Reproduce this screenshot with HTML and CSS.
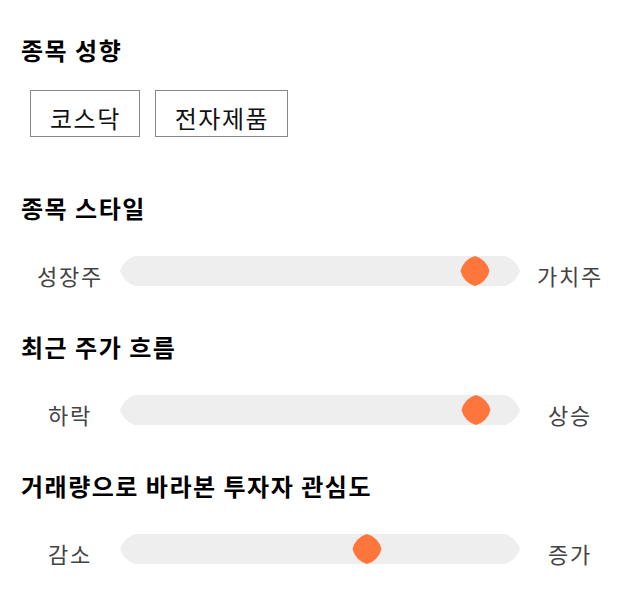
FILE: index.html
```html
<!DOCTYPE html>
<html>
<head>
  <title>종목 성향</title>
  <meta name="viewport" content="width=device-width, initial-scale=1.0">
  <link rel="stylesheet" href="styles.css">
</head>
<body>
  <div class="container">
    <section class="section">
      <h3 class="title">종목 성향</h3>
      <div class="tags">
        <span class="tag">코스닥</span>
        <span class="tag">전자제품</span>
      </div>
    </section>

    <section class="section">
      <h3 class="title">종목 스타일</h3>
      <div class="slider-row">
        <span class="label">성장주</span>
        <div class="track">
          <svg class="track-bg" viewBox="0 0 400 30" width="400" height="30">
            <path d="M15 0 H385 A24 24 0 0 1 400 15 A24 24 0 0 1 385 30 H15 A24 24 0 0 1 0 15 A24 24 0 0 1 15 0 Z" fill="#eeeeee"/>
          </svg>
          <svg class="thumb" style="left: 340px;" viewBox="0 0 30 30" width="30" height="30">
            <path d="M15 0 A20 20 0 0 1 29.5 15 A20 20 0 0 1 15 30 A20 20 0 0 1 0.5 15 A20 20 0 0 1 15 0 Z" fill="#ff763d"/>
          </svg>
        </div>
        <span class="label">가치주</span>
      </div>
    </section>

    <section class="section">
      <h3 class="title">최근 주가 흐름</h3>
      <div class="slider-row">
        <span class="label">하락</span>
        <div class="track">
          <svg class="track-bg" viewBox="0 0 400 30" width="400" height="30">
            <path d="M15 0 H385 A24 24 0 0 1 400 15 A24 24 0 0 1 385 30 H15 A24 24 0 0 1 0 15 A24 24 0 0 1 15 0 Z" fill="#eeeeee"/>
          </svg>
          <svg class="thumb" style="left: 341px;" viewBox="0 0 30 30" width="30" height="30">
            <path d="M15 0 A20 20 0 0 1 29.5 15 A20 20 0 0 1 15 30 A20 20 0 0 1 0.5 15 A20 20 0 0 1 15 0 Z" fill="#ff763d"/>
          </svg>
        </div>
        <span class="label">상승</span>
      </div>
    </section>

    <section class="section">
      <h3 class="title">거래량으로 바라본 투자자 관심도</h3>
      <div class="slider-row">
        <span class="label">감소</span>
        <div class="track">
          <svg class="track-bg" viewBox="0 0 400 30" width="400" height="30">
            <path d="M15 0 H385 A24 24 0 0 1 400 15 A24 24 0 0 1 385 30 H15 A24 24 0 0 1 0 15 A24 24 0 0 1 15 0 Z" fill="#eeeeee"/>
          </svg>
          <svg class="thumb" style="left: 232px;" viewBox="0 0 30 30" width="30" height="30">
            <path d="M15 0 A20 20 0 0 1 29.5 15 A20 20 0 0 1 15 30 A20 20 0 0 1 0.5 15 A20 20 0 0 1 15 0 Z" fill="#ff763d"/>
          </svg>
        </div>
        <span class="label">증가</span>
      </div>
    </section>
  </div>
</body>
</html>
```

FILE: styles.css
```css
* {
  margin: 0;
  padding: 0;
  box-sizing: border-box;
}

body {
  font-family: "Noto Sans CJK KR", "Noto Sans", sans-serif;
  background: #ffffff;
  color: #000000;
}

.container {
  padding: 34px 20px 0 20px;
}

.section {
  margin-bottom: 45px;
}

.section:first-child {
  margin-bottom: 55px;
}

.title {
  font-size: 24px;
  font-weight: 700;
  line-height: 32px;
  letter-spacing: 1.5px;
  padding-left: 1px;
}

.tags {
  display: flex;
  gap: 15px;
  margin-top: 24px;
  margin-left: 10px;
}

.tag {
  display: block;
  height: 47px;
  line-height: 33px;
  padding: 10px 18px 2px 19px;
  border: 1px solid #888888;
  font-size: 24px;
  letter-spacing: 1.5px;
  color: #111111;
}

.slider-row {
  display: flex;
  align-items: center;
  margin-top: 32px;
  height: 30px;
}

.label {
  width: 100px;
  padding-top: 8px;
  text-align: center;
  font-size: 22px;
  letter-spacing: 1.8px;
  color: #444444;
}

.track {
  position: relative;
  width: 400px;
  height: 30px;
}

.track-bg {
  display: block;
}

.thumb {
  position: absolute;
  top: 0;
}
```
